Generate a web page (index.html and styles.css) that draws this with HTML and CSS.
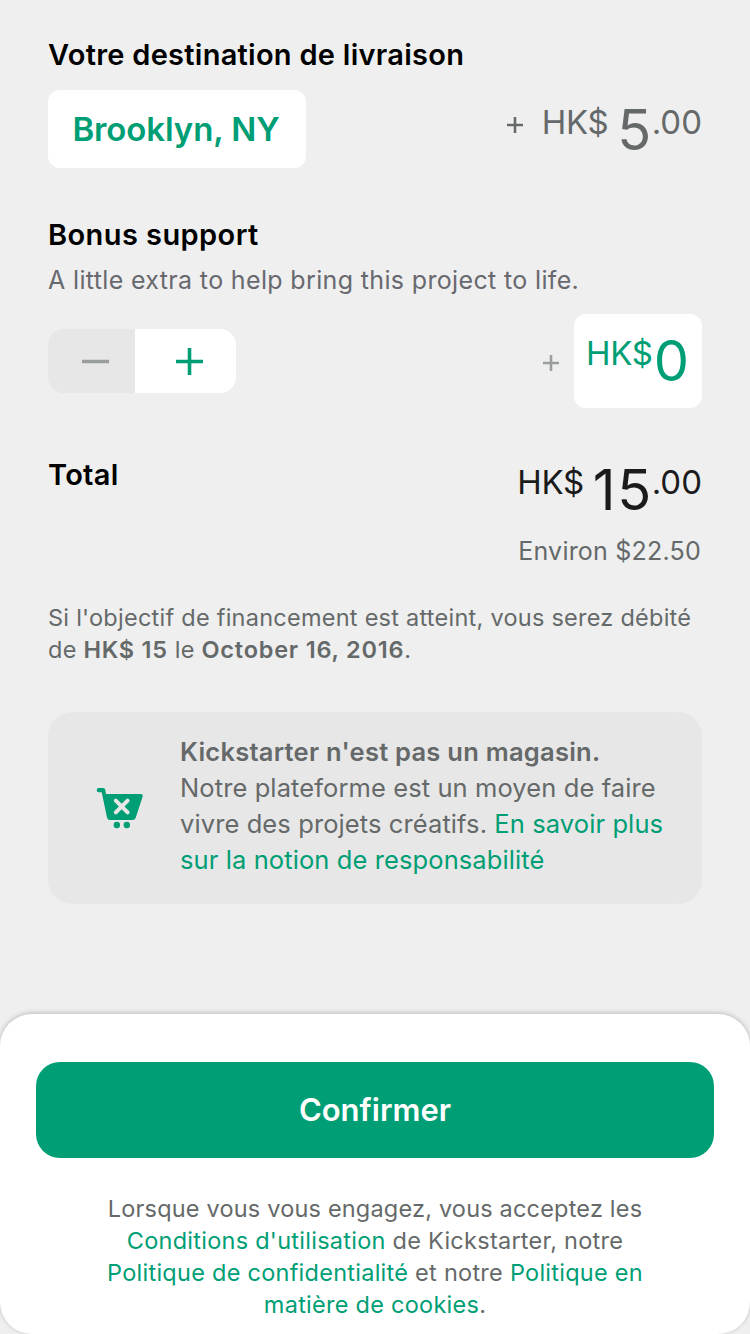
FILE: index.html
```html
<!DOCTYPE html>
<html lang="fr">
<head>
<meta charset="utf-8">
<title>Confirmer</title>
<link rel="stylesheet" href="styles.css">
</head>
<body>
<main class="page">
  <section class="shipping">
    <h2 class="heading heading-shipping">Votre destination de livraison</h2>
    <div class="row">
      <button class="destination">Brooklyn, NY</button>
      <div class="amount amount-shipping"><svg class="plus" viewBox="0 0 16 16"><path d="M0 8H16M8 0V16"/></svg><span class="currency">HK$</span><span class="units">5</span><span class="cents">.00</span></div>
    </div>
  </section>
  <section class="bonus">
    <h2 class="heading heading-bonus">Bonus support</h2>
    <p class="hint">A little extra to help bring this project to life.</p>
    <div class="row row-bonus">
      <div class="stepper">
        <button class="step step-minus"><svg width="27" height="27" viewBox="0 0 27 27"><path d="M0 13.5H27"/></svg></button>
        <button class="step step-plus"><svg width="27" height="27" viewBox="0 0 27 27"><path d="M0 13.5H27M13.5 0V27"/></svg></button>
      </div>
      <div class="bonus-side">
        <svg class="plus plus-muted" viewBox="0 0 16 16"><path d="M0 8H16M8 0V16"/></svg>
        <div class="bonus-field amount"><span class="currency">HK$</span><span class="units">0</span></div>
      </div>
    </div>
  </section>
  <section class="total row">
    <h2 class="heading heading-total">Total</h2>
    <div class="total-side">
      <div class="amount amount-total"><span class="currency">HK$</span><span class="units units-total">15</span><span class="cents">.00</span></div>
      <p class="approx">Environ $22.50</p>
    </div>
  </section>
  <p class="charge"><span class="line charge-1">Si l'objectif de financement est atteint, vous serez débité</span><span class="line charge-2">de <b>HK$ 15</b> le <b>October 16, 2016</b>.</span></p>
  <aside class="notice">
    <svg class="cart" width="48" height="42" viewBox="0 0 48 42">
      <path class="cart-body" d="M2.7 0H7.3Q8.9 0 9.2 1.6L10 6H44.5Q47.5 6 46.5 9L39.8 29.5Q38.9 32 36.5 32H14Q11.6 32 11 29.5L5.7 4.3H2.7Q.7 4.3 .7 2.15T2.7 0Z"/>
      <path class="cart-cross" d="M19.8 12.6L31.6 24.4M31.6 12.6L19.8 24.4"/>
      <circle cx="20.8" cy="37" r="3.2"/><circle cx="30.8" cy="37" r="3.2"/>
    </svg>
    <p class="notice-text"><b class="line n1">Kickstarter n'est pas un magasin.</b><span class="line n2">Notre plateforme est un moyen de faire</span><span class="line n3">vivre des projets créatifs. <a>En savoir plus</a></span><a class="line n4">sur la notion de responsabilité</a></p>
  </aside>
</main>
<footer class="sheet">
  <button class="confirm">Confirmer</button>
  <p class="legal"><span class="line l1">Lorsque vous vous engagez, vous acceptez les</span><span class="line l2"><a>Conditions d'utilisation</a> de Kickstarter, notre</span><span class="line l3"><a>Politique de confidentialité</a> et notre <a>Politique en</a></span><span class="line l4"><a>matière de cookies</a>.</span></p>
</footer>
</body>
</html>
```
FILE: styles.css
```css
* { box-sizing: border-box; margin: 0; padding: 0; }
body {
  width: 750px; height: 1334px; overflow: hidden;
  display: flex; flex-direction: column;
  background: #efefef; color: #656969;
  font-family: Inter, "Noto Sans", sans-serif;
}
button { border: 0; font: inherit; }
svg { display: block; flex: none; }
.page { height: 1014px; flex: none; padding: 37px 48px 0; }
.row { display: flex; justify-content: space-between; align-items: flex-start; }
.heading { font-size: 29px; line-height: 36px; font-weight: 600; color: #000; white-space: nowrap; letter-spacing: .27px; }
.heading-bonus { letter-spacing: .42px; }
.line { display: block; white-space: nowrap; }
a { color: #009e74; }

.destination {
  width: 258px; height: 78px; margin-top: 17px; padding-right: 2px; border-radius: 12px;
  background: #fff; color: #009e74; font-size: 33px; font-weight: 600;
  line-height: 78px; white-space: nowrap; letter-spacing: -.1px;
}
.amount { display: flex; align-items: flex-start; white-space: nowrap; }
.currency, .cents { font-size: 33px; line-height: 40px; }
.currency { letter-spacing: -.3px; }
.units { font-size: 56px; line-height: 56px; }
.amount-shipping { margin-top: 29px; }
.amount-shipping .currency { margin: 0 9px 0 19px; }
.amount-shipping .units { letter-spacing: .3px; }
.plus { width: 16px; height: 16px; margin-top: 15px; fill: none; stroke: #656969; stroke-width: 2.6; }

.bonus { margin-top: 49px; }
.hint { margin-top: 9px; font-size: 25px; line-height: 36px; white-space: nowrap; letter-spacing: .35px; color: #68696f; }
.row-bonus { margin-top: 16px; }
.stepper { display: flex; width: 188px; height: 64px; margin-top: 15px; border-radius: 16px; overflow: hidden; }
.step { display: flex; align-items: center; justify-content: center; }
.step svg { fill: none; stroke-width: 3.6; }
.step-minus { width: 87px; background: #e7e7e7; stroke: #9b9e9e; padding: 0 0 0 7px; }
.step-plus { width: 101px; background: #fff; stroke: #009e74; padding: 0 0 0 7px; }
.bonus-side { display: flex; }
.bonus-side .plus-muted { stroke: #9b9e9e; margin: 41px 15px 0 0; }
.bonus-field { width: 128px; height: 94px; padding: 19px 0 0 12px; border-radius: 12px; background: #fff; color: #009e74; }
.bonus-field .units { margin-left: 1px; }

.total { margin-top: 48px; }
.heading-total { margin-top: 1px; }
.total-side { display: flex; flex-direction: column; align-items: flex-end; }
.amount-total { margin-top: 6px; color: #1b1b1b; }
.amount-total .currency { margin-right: 9px; }
.units-total { letter-spacing: 1.5px; }
.amount-total .cents { margin-left: -1px; }
.approx { margin: 17px 1px 0 0; font-size: 25px; line-height: 32px; white-space: nowrap; letter-spacing: .22px; }

.charge { margin-top: 35px; font-size: 23.5px; line-height: 32px; letter-spacing: .25px; }
b { font-weight: 600; }
.charge b { letter-spacing: .78px; }
.notice { display: flex; height: 192px; margin-top: 46px; padding: 22px 0 0 48px; border-radius: 24px; background: #e7e7e7; }
.cart { margin: 54px 36px 0 0; fill: #009e74; }
.cart-cross { fill: none; stroke: #e7e7e7; stroke-width: 4; stroke-linecap: round; }
.notice-text { font-size: 25.5px; line-height: 36px; letter-spacing: .1px; }
.n1 { letter-spacing: .25px; }

.sheet { height: 320px; flex: none; padding: 48px 36px 0; border-radius: 32px; background: #fff; box-shadow: 0 -1px 5px rgba(0,0,0,.22); }
.confirm { display: block; width: 678px; height: 96px; border-radius: 24px; background: #009e74; color: #fff; font-size: 31px; line-height: 96px; font-weight: 600; }
.legal { margin-top: 35px; font-size: 23.5px; line-height: 32px; text-align: center; letter-spacing: .26px; }
.l1 { letter-spacing: .19px; }
```
